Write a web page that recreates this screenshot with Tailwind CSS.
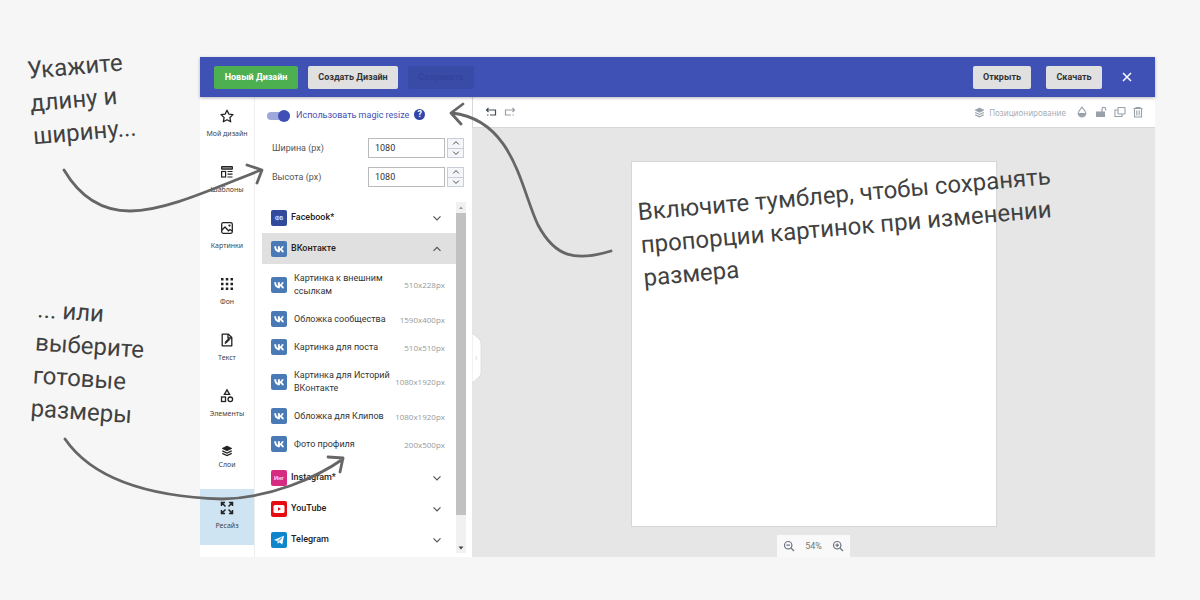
<!DOCTYPE html>
<html lang="ru">
<head>
<meta charset="utf-8">
<meta name="viewport" content="width=device-width, initial-scale=1">
<title>Ресайз</title>
<script src="https://cdn.jsdelivr.net/npm/@tailwindcss/browser@4"></script>
</head>
<body class="relative min-h-screen overflow-x-hidden bg-[#f6f6f6] pt-[57px] pr-[45px] pb-[43px] pl-[200px] font-['Roboto','Liberation_Sans',sans-serif] text-[9px] leading-[13px] text-[#333]">

<svg class="hidden" aria-hidden="true">
  <symbol id="vk" viewBox="0 0 16 16"><rect width="16" height="16" rx="2" fill="#4a7ab5"/><path d="M8.400 11.200C5.300 11.200 3.400 9 3.200 5.200h1.900c.1 2.400 1 3.500 1.800 3.700V5.200h2v2.300c.8-.1 1.600-1.200 1.900-2.300h1.900c-.3 1.400-1.300 2.400-2 2.900.7.400 1.800 1.300 2.300 3.100h-2.100c-.3-1.100-1-1.800-2-1.900v1.900z" fill="#fff"/></symbol>
  <symbol id="down" viewBox="0 0 10 10"><path d="M1.500 3.300 5 6.800l3.500-3.500" fill="none" stroke="currentColor" stroke-width="1.200"/></symbol>
  <symbol id="up" viewBox="0 0 10 10"><path d="M1.500 6.800 5 3.300l3.500 3.500" fill="none" stroke="currentColor" stroke-width="1.200"/></symbol>
  <symbol id="layers" viewBox="0 0 14 14"><path d="M7 1.300 12.500 4 7 6.700 1.500 4z" fill="currentColor" stroke="currentColor" stroke-linejoin="round"/><path d="M1.500 6.900 7 9.500l5.500-2.600M1.500 9.800 7 12.400l5.500-2.600" fill="none" stroke="currentColor" stroke-width="1.500"/></symbol>
</svg>

<main class="flex min-h-[500px] flex-col bg-white">
  <header class="relative z-10 flex h-10 items-center bg-[#3f51b5] pr-[18px] pl-[14px] shadow-[0_1px_3px_rgba(0,0,0,.3)]">
    <div class="flex gap-[10px]">
      <button class="h-[23px] w-[84px] rounded-xs bg-[#4caf50] font-bold text-white">Новый Дизайн</button>
      <button class="h-[23px] w-[90px] rounded-xs bg-[#e0e0e0] font-bold">Создать Дизайн</button>
      <button disabled class="h-[23px] w-[66px] rounded-xs bg-[#3a4aa7] font-bold text-[#33439d]">Сохранить</button>
    </div>
    <div class="ml-auto flex items-center gap-[15px]">
      <button class="h-[23px] w-[58px] rounded-xs bg-[#e0e0e0] font-bold">Открыть</button>
      <button class="h-[23px] w-[56px] rounded-xs bg-[#e0e0e0] font-bold">Скачать</button>
      <button aria-label="Закрыть" class="grid size-5 place-items-center text-white"><svg class="size-[10px]" viewBox="0 0 10 10"><path d="m1 1 8 8M9 1 1 9" stroke="currentColor" stroke-width="1.500"/></svg></button>
    </div>
  </header>

  <div class="flex flex-1">
    <nav class="flex w-[55px] shrink-0 flex-col border-r border-[#eee] text-[7px] leading-[10px] whitespace-nowrap text-[#444] [&>button]:flex [&>button]:h-14 [&>button]:flex-col [&>button]:items-center [&>button]:gap-[5px] [&>button]:pt-[11px] [&_svg]:size-4 [&_svg]:text-[#222] font-['Noto_Sans','Open_Sans',sans-serif]">
      <button><svg viewBox="0 0 16 16" fill="none" stroke="currentColor" stroke-width="1.300" stroke-linejoin="round"><path d="m8 2.200 1.800 3.900 4.200.5-3.100 2.900.8 4.300L8 11.700l-3.700 2.100.8-4.300L2 6.600l4.200-.5z"/></svg>Мой дизайн</button>
      <button><svg viewBox="0 0 16 16" fill="none" stroke="currentColor" stroke-width="1.200"><rect x="2.600" y="2.600" width="10.800" height="2.600" rx=".5" fill="#999"/><rect x="2.600" y="7.500" width="4" height="5.500"/><path d="M8.500 7.500h5M8.500 10.200h5M8.500 13h5"/></svg>Шаблоны</button>
      <button><svg viewBox="0 0 16 16" fill="none" stroke="currentColor" stroke-width="1.300"><rect x="2.700" y="2.700" width="10.600" height="10.600" rx="1.500"/><path d="m3 10 3-3 3.500 3.800 1.500-1.300 2 1.500"/><circle cx="10.500" cy="5.600" r=".5"/></svg>Картинки</button>
      <button><svg viewBox="0 0 16 16" fill="currentColor"><path d="M2 2h2.500v2.500H2zM6.800 2h2.500v2.500H6.800zM11.500 2H14v2.500h-2.500zM2 6.800h2.500v2.500H2zM6.800 6.800h2.500v2.500H6.800zM11.500 6.800H14v2.500h-2.500zM2 11.500h2.500V14H2zM6.800 11.500h2.500V14H6.800zM11.500 11.500H14V14h-2.500z"/></svg>Фон</button>
      <button><svg viewBox="0 0 16 16" fill="none" stroke="currentColor" stroke-width="1.300"><path d="M3.200 2.200h6.200L12.800 5.500v8.300H3.200z" stroke-linejoin="round"/><path d="M9 2v4h4"/><path d="m6 11.500.5-2 3.300-3 1 1-3.100 3.300z" fill="currentColor" stroke-width=".8"/></svg>Текст</button>
      <button><svg viewBox="0 0 16 16" fill="none" stroke="currentColor" stroke-width="1.300"><path d="M8 1.800 10.600 6.300H5.400z"/><rect x="2.500" y="9" width="4" height="4.500"/><circle cx="11.300" cy="11.300" r="2.300"/></svg>Элементы</button>
      <button class="gap-0!"><svg viewBox="0 0 16 16"><use href="#layers" x="2" y="1" width="12" height="12"/></svg>Слои</button>
      <button class="bg-[#cfe4f2]" aria-current="page"><svg viewBox="0 0 16 16" fill="none" stroke="currentColor" stroke-width="1.500"><path d="M2.500 6V2.500H6M2.500 2.500l4 4M10 2.500h3.500V6M13.500 2.500l-4 4M2.500 10v3.500H6M2.500 13.500l4-4M10 13.500h3.500V10M13.500 13.500l-4-4"/></svg>Ресайз</button>
    </nav>

    <section class="flex h-[460px] w-[217px] shrink-0 flex-col pl-[7px]">
      <div class="flex h-[37px] items-center pl-[5px] text-[#3f51b5]">
        <input id="magic" type="checkbox" checked class="relative h-2 w-[23px] appearance-none rounded-full bg-[#9fa8da] before:absolute before:-top-0.5 before:right-0 before:size-3 before:rounded-full before:bg-[#3f51b5]">
        <label for="magic" class="ml-[6px]">Использовать magic resize</label>
        <button aria-label="Справка" class="mb-[3px] ml-[5px] size-[11px] rounded-full bg-[#3146aa] text-[9px] leading-[11px] font-bold text-white">?</button>
      </div>
      <div class="flex flex-col gap-[9px] pt-1 pr-[8px] pl-[10px]">
        <div class="flex h-5 items-center">
          <label for="w" class="flex-1 text-[#555]">Ширина (px)</label>
          <input id="w" value="1080" class="h-5 w-[77px] border border-[#bbb] px-1.5 text-[9px]">
          <div class="ml-0.5 flex h-5 w-[17px] flex-col border border-[#c8cdd8] bg-[#f4f6fa] text-[#444]">
            <button aria-label="Увеличить ширину" class="grid flex-1 place-items-center border-b border-[#c8cdd8]"><svg class="size-2"><use href="#up"/></svg></button>
            <button aria-label="Уменьшить ширину" class="grid flex-1 place-items-center"><svg class="size-2"><use href="#down"/></svg></button>
          </div>
        </div>
        <div class="flex h-5 items-center">
          <label for="h" class="flex-1 text-[#555]">Высота (px)</label>
          <input id="h" value="1080" class="h-5 w-[77px] border border-[#bbb] px-1.5 text-[9px]">
          <div class="ml-0.5 flex h-5 w-[17px] flex-col border border-[#c8cdd8] bg-[#f4f6fa] text-[#444]">
            <button aria-label="Увеличить высоту" class="grid flex-1 place-items-center border-b border-[#c8cdd8]"><svg class="size-2"><use href="#up"/></svg></button>
            <button aria-label="Уменьшить высоту" class="grid flex-1 place-items-center"><svg class="size-2"><use href="#down"/></svg></button>
          </div>
        </div>
      </div>

      <div class="mt-[15px] mb-[4px] flex min-h-0 flex-1 overflow-hidden">
        <div class="w-[194px] [&>button]:flex [&>button]:h-[31px] [&>button]:w-full [&>button]:items-center [&>button]:gap-1 [&>button]:pr-[14px] [&>button]:pl-[9px] [&>button]:text-left [&>button]:font-medium [&>button]:text-[#222] [&>button>span]:flex-1">
          <button><svg class="size-4" viewBox="0 0 16 16"><rect width="16" height="16" rx="2" fill="#314a9b"/><text x="8" y="10" text-anchor="middle" font-size="6" font-weight="700" fill="#cdd8ff">ФБ</text></svg><span>Facebook*</span><svg class="size-[10px] text-[#555]"><use href="#down"/></svg></button>
          <button class="bg-[#e0e0e0]"><svg class="size-4"><use href="#vk"/></svg><span>ВКонтакте</span><svg class="size-[10px] text-[#555]"><use href="#up"/></svg></button>
          <ul class="pb-1 [&>li]:flex [&>li]:h-7 [&>li]:items-center [&>li]:pr-[11px] [&>li]:pl-[9px] [&_a]:w-[102px] [&_span]:ml-auto [&_span]:font-['Open_Sans',sans-serif] [&_span]:text-[8px] [&_span]:text-[#999] [&_svg]:mr-[7px] [&_svg]:size-4 [&_svg]:shrink-0">
            <li class="h-[41px]!"><svg><use href="#vk"/></svg><a href="#">Картинка к внешним<br>ссылкам</a><span>510x228px</span></li>
            <li><svg><use href="#vk"/></svg><a href="#">Обложка сообщества</a><span>1590x400px</span></li>
            <li><svg><use href="#vk"/></svg><a href="#">Картинка для поста</a><span>510x510px</span></li>
            <li class="h-[41px]!"><svg><use href="#vk"/></svg><a href="#">Картинка для Историй<br>ВКонтакте</a><span>1080x1920px</span></li>
            <li><svg><use href="#vk"/></svg><a href="#">Обложка для Клипов</a><span>1080x1920px</span></li>
            <li><svg><use href="#vk"/></svg><a href="#">Фото профиля</a><span>200x500px</span></li>
          </ul>
          <button><svg class="size-4" viewBox="0 0 16 16"><rect width="16" height="16" rx="2" fill="#d72b82"/><text x="8" y="10" text-anchor="middle" font-size="6" font-weight="700" fill="#ffd0e8">Инг</text></svg><span>Instagram*</span><svg class="size-[10px] text-[#555]"><use href="#down"/></svg></button>
          <button><svg class="size-4" viewBox="0 0 16 16"><rect width="16" height="16" rx="2" fill="#e60c12"/><rect x="2.500" y="4" width="11" height="8" rx="1.500" fill="#fff"/><path d="m7 6.300 3 1.700-3 1.700z" fill="#e60c12"/></svg><span>YouTube</span><svg class="size-[10px] text-[#555]"><use href="#down"/></svg></button>
          <button><svg class="size-4" viewBox="0 0 16 16"><rect width="16" height="16" rx="2" fill="#0f86cc"/><path d="M2.800 8 13 3.800l-1.700 8.700-3-2.200-1.500 1.500-.5-2.700z" fill="#fff"/><path d="m6.300 9.100 4.700-3.500-3.300 4.100" stroke="#0f86cc" stroke-width=".6" fill="none"/></svg><span>Telegram</span><svg class="size-[10px] text-[#555]"><use href="#down"/></svg></button>
        </div>
        <div class="flex w-[10px] flex-col items-center justify-between bg-[#f1f1f1]">
          <svg class="h-[11px] w-[10px] shrink-0" viewBox="0 0 10 11"><path d="m3 7 2-2.500L7 7z" fill="#999"/></svg>
          <div class="mb-auto h-[302px] w-full bg-[#c1c1c1]"></div>
          <svg class="h-[11px] w-[10px] shrink-0" viewBox="0 0 10 11"><path d="m2.500 4.500 2.500 3 2.500-3z" fill="#444"/></svg>
        </div>
      </div>
    </section>

    <section class="relative flex min-w-0 flex-1 flex-col bg-[#e6e6e6]">
      <div class="flex h-[31px] items-center border-b border-l border-[#d8d8d8] bg-white pr-[11px] pl-[12px] text-[#98a0a9]">
        <button aria-label="Отменить" class="text-[#444b58]"><svg class="size-3" viewBox="0 0 12 12" fill="none" stroke="currentColor" stroke-width="1.200"><path d="M3.500 2 1.500 4l2 2M1.500 4H10.500v5H5M3.500 9H2"/></svg></button>
        <button aria-label="Повторить" class="ml-[7px]"><svg class="size-3" viewBox="0 0 12 12" fill="none" stroke="currentColor" stroke-width="1.200"><path d="m8.500 2 2 2-2 2M10.500 4h-9v5H7M8.500 9H10"/></svg></button>
        <button class="ml-auto flex items-center gap-1 font-['Noto_Sans',sans-serif] text-[8px] text-[#a8aeb5]"><svg class="size-[11px] text-[#98a0a9]"><use href="#layers"/></svg>Позиционирование</button>
        <button aria-label="Прозрачность" class="ml-[10px]"><svg class="size-3" viewBox="0 0 12 12"><path d="M6 1.200C4.500 3.200 2.200 5 2.200 7.200a3.800 3.800 0 0 0 7.600 0C9.800 5 7.500 3.200 6 1.200z" fill="none" stroke="currentColor" stroke-width="1.100"/><path d="M2.300 7h7.400c.1 5-7.500 5-7.400 0z" fill="currentColor"/></svg></button>
        <button aria-label="Блокировка" class="ml-[7px]"><svg class="size-3" viewBox="0 0 12 12"><rect x="1" y="5.500" width="9" height="5.500" fill="currentColor"/><path d="M7 6V3.300a1.800 1.800 0 0 1 3.700 0V4.500" fill="none" stroke="currentColor" stroke-width="1.200"/></svg></button>
        <button aria-label="Копировать" class="ml-[7px]"><svg class="size-3" viewBox="0 0 12 12" fill="none" stroke="currentColor" stroke-width="1.100"><rect x="4" y="1.500" width="7" height="6.500" rx=".5"/><path d="M4 4H1v6.500h7V8"/></svg></button>
        <button aria-label="Удалить" class="ml-[6px]"><svg class="size-3" viewBox="0 0 12 12" fill="none" stroke="currentColor" stroke-width="1.100"><path d="M1.500 2.500h9M4 2.500v-1h4v1M2.500 3v8h7V3M4.800 4.500V9.500M7.200 4.500V9.500"/></svg></button>
      </div>
      <div class="flex flex-1 flex-col items-center pt-[33px]">
        <div class="size-[366px] border border-[#d6d6d6] bg-white"></div>
        <div class="mt-auto flex h-[22px] w-[73px] items-center justify-between bg-[#f9f9f9] px-1.5 text-[#777]">
          <button aria-label="Уменьшить"><svg class="size-3" viewBox="0 0 12 12" fill="none" stroke="#6b7280" stroke-width="1.200"><circle cx="5.200" cy="5.200" r="3.700"/><path d="m8 8 3 3M3.500 5.200h3.400"/></svg></button>
          <span>54%</span>
          <button aria-label="Увеличить"><svg class="size-3" viewBox="0 0 12 12" fill="none" stroke="#6b7280" stroke-width="1.200"><circle cx="5.200" cy="5.200" r="3.700"/><path d="m8 8 3 3M3.500 5.200h3.400M5.200 3.500v3.400"/></svg></button>
        </div>
      </div>
      <!-- panel collapse handle -->
      <button aria-label="Свернуть панель" class="absolute top-[236px] left-0"><svg class="h-[50px] w-[10px]" viewBox="0 0 10 50"><path d="M0 0 7 6Q9 8 9 10V40Q9 42 7 44L0 50z" fill="#fff" stroke="#d5d5d5" stroke-width=".7"/><path d="m5 23-1.500 2L5 27" fill="none" stroke="#ccc" stroke-width=".7"/></svg></button>
    </section>
  </div>
</main>

<!-- hand-drawn hints laid over the editor -->
<div class="pointer-events-none absolute inset-0 z-20 overflow-hidden text-[24px] leading-[33px] whitespace-nowrap text-[#414141]">
  <p class="absolute top-[50px] left-[30px] origin-center -rotate-5">Укажите<br>длину и<br>ширину...</p>
  <p class="absolute top-[297px] left-[34px] origin-center rotate-4">... или<br>выберите<br>готовые<br>размеры</p>
  <p class="absolute top-[178px] left-[640px] origin-center -rotate-5">Включите тумблер, чтобы сохранять<br>пропорции картинок при изменении<br>размера</p>
  <svg class="absolute top-0 left-0 h-[600px] w-[1200px]" viewBox="0 0 1200 600" fill="none" stroke="#666" stroke-width="2.800" stroke-linecap="round" stroke-linejoin="round">
    <path d="M64 170C80 197 103 211 130 211C165 211 210 190 261 170M247 165L262 170L257 183"/>
    <path d="M65 439C96 484 160 497 222 499C270 498 316 478 343 459M328 457L343 458L340 472"/>
    <path d="M611 251C575 262 555 257 538 225C521 190 514 120 452 113M463 104L451 113L461 124"/>
  </svg>
</div>
</body>
</html>
